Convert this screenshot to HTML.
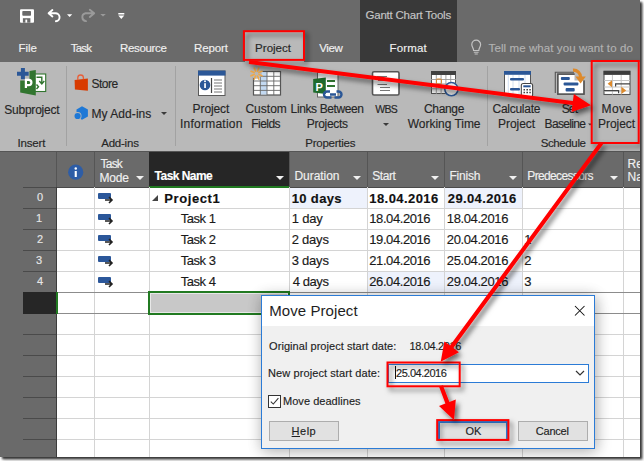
<!DOCTYPE html><html><head><meta charset="utf-8"><style>
*{box-sizing:border-box;}
html,body{margin:0;padding:0;background:#fff;width:644px;height:461px;overflow:hidden;}
body{font-family:"Liberation Sans",sans-serif;}
#page{position:absolute;left:0;top:0;width:640px;height:457px;overflow:hidden;background:#6a6a6a;box-shadow:2px 2px 2px rgba(0,0,0,.7), 3px 3px 3px rgba(0,0,0,.3);}
.a{position:absolute;}
.t{position:absolute;white-space:nowrap;line-height:1;-webkit-text-stroke:0.15px currentColor;}
.tab{position:absolute;top:42px;font-size:12px;letter-spacing:-0.45px;color:#f0f0f0;white-space:nowrap;line-height:1;}
.lbl{position:absolute;font-size:12px;letter-spacing:-0.35px;color:#262626;white-space:nowrap;line-height:15px;text-align:center;}
.grp{position:absolute;top:137.5px;font-size:11.5px;letter-spacing:-0.35px;color:#262626;white-space:nowrap;line-height:1;}
.sep{position:absolute;top:66px;width:1px;height:80px;background:#a2a2a2;}
.hd{position:absolute;font-size:12px;color:#f0f0f0;white-space:nowrap;line-height:1;}
.c{position:absolute;font-size:13px;letter-spacing:-0.35px;color:#1a1a1a;white-space:nowrap;line-height:1;}
.b{font-weight:bold;font-size:13.5px;letter-spacing:0;}
.tri{position:absolute;width:0;height:0;border-left:4px solid transparent;border-right:4px solid transparent;border-top:4px solid #f0f0f0;}
</style></head><body><div id="page">
<div class="a" style="left:0;top:0;width:640px;height:62px;background:#6a6a6a;"></div>
<div class="a" style="left:360px;top:0;width:97px;height:62px;background:#393939;"></div>
<div class="t" style="left:365.50px;top:10.10px;font-size:11.5px;color:#c6c6c6;letter-spacing:-0.225px;">Gantt Chart Tools</div>
<div class="t" style="left:18.40px;top:42.60px;font-size:11.5px;color:#f0f0f0;letter-spacing:0.033px;">File</div>
<div class="t" style="left:70.80px;top:42.60px;font-size:11.5px;color:#f0f0f0;letter-spacing:-0.800px;">Task</div>
<div class="t" style="left:120.00px;top:42.60px;font-size:11.5px;color:#f0f0f0;letter-spacing:-0.343px;">Resource</div>
<div class="t" style="left:194.00px;top:42.60px;font-size:11.5px;color:#f0f0f0;letter-spacing:-0.120px;">Report</div>
<div class="t" style="left:319.20px;top:42.60px;font-size:11.5px;color:#f0f0f0;letter-spacing:-0.367px;">View</div>
<div class="t" style="left:389.60px;top:42.60px;font-size:11.5px;color:#f0f0f0;letter-spacing:0.140px;">Format</div>
<div class="a" style="left:245px;top:32px;width:59px;height:30px;background:#b9b9b9;"></div>
<div class="t" style="left:255.10px;top:42.60px;font-size:11.5px;color:#262626;letter-spacing:0.017px;">Project</div>
<div class="t" style="left:488.60px;top:42.60px;font-size:11.5px;color:#b2b2b2;letter-spacing:0.088px;">Tell me what you want to do</div>
<div class="a" style="left:0;top:62px;width:640px;height:89px;background:#b9b9b9;"></div>
<div class="sep" style="left:66px;"></div>
<div class="sep" style="left:175px;"></div>
<div class="sep" style="left:487px;"></div>
<div class="t" style="left:4.20px;top:103.60px;font-size:12px;color:#262626;letter-spacing:-0.211px;">Subproject</div>
<div class="t" style="left:91.40px;top:78.20px;font-size:12px;color:#262626;letter-spacing:-0.475px;">Store</div>
<div class="t" style="left:91.40px;top:107.50px;font-size:12px;color:#262626;letter-spacing:0.067px;">My Add-ins</div>
<div class="t" style="left:192.60px;top:103.30px;font-size:12px;color:#262626;letter-spacing:-0.100px;">Project</div>
<div class="t" style="left:179.90px;top:118.40px;font-size:12px;color:#262626;letter-spacing:0.250px;">Information</div>
<div class="t" style="left:245.40px;top:103.30px;font-size:12px;color:#262626;letter-spacing:0.020px;">Custom</div>
<div class="t" style="left:251.30px;top:118.40px;font-size:12px;color:#262626;letter-spacing:-0.540px;">Fields</div>
<div class="t" style="left:290.60px;top:103.30px;font-size:12px;color:#262626;letter-spacing:-0.383px;">Links Between</div>
<div class="t" style="left:306.80px;top:118.40px;font-size:12px;color:#262626;letter-spacing:-0.314px;">Projects</div>
<div class="t" style="left:375.20px;top:104.30px;font-size:10.5px;color:#262626;letter-spacing:-0.700px;">WBS</div>
<div class="t" style="left:424.00px;top:103.30px;font-size:12px;color:#262626;letter-spacing:-0.340px;">Change</div>
<div class="t" style="left:407.80px;top:118.40px;font-size:12px;color:#262626;letter-spacing:-0.036px;">Working Time</div>
<div class="t" style="left:492.50px;top:103.30px;font-size:12px;color:#262626;letter-spacing:-0.263px;">Calculate</div>
<div class="t" style="left:498.00px;top:118.40px;font-size:12px;color:#262626;letter-spacing:-0.033px;">Project</div>
<div class="t" style="left:561.70px;top:103.30px;font-size:12px;color:#262626;letter-spacing:-0.850px;">Set</div>
<div class="t" style="left:544.60px;top:118.40px;font-size:12px;color:#262626;letter-spacing:-0.657px;">Baseline</div>
<div class="t" style="left:601.60px;top:103.30px;font-size:12px;color:#262626;letter-spacing:0.367px;">Move</div>
<div class="t" style="left:598.00px;top:118.40px;font-size:12px;color:#262626;letter-spacing:-0.033px;">Project</div>
<div class="t" style="left:17.60px;top:137.60px;font-size:11.5px;color:#262626;letter-spacing:-0.200px;">Insert</div>
<div class="t" style="left:101.20px;top:137.60px;font-size:11.5px;color:#262626;letter-spacing:-0.217px;">Add-ins</div>
<div class="t" style="left:305.30px;top:137.60px;font-size:11.5px;color:#262626;letter-spacing:-0.256px;">Properties</div>
<div class="t" style="left:540.70px;top:137.60px;font-size:11.5px;color:#262626;letter-spacing:-0.386px;">Schedule</div>
<svg class="a" style="left:0;top:0;" width="640" height="160" viewBox="0 0 640 160"><rect x="20" y="9.3" width="14" height="13.4" rx="1" fill="#fff"/><rect x="22.3" y="11" width="8.7" height="4.8" rx="0.8" fill="#6a6a6a"/><rect x="22.9" y="18.2" width="7.5" height="4.5" fill="#6a6a6a"/><rect x="25.4" y="19.6" width="1.8" height="3" fill="#fff"/><path d="M52.4 10L48.6 13.2L52.4 16.4M48.8 13.2H55.2A4 4 0 0 1 55.9 21.2" stroke="#fff" stroke-width="1.9" fill="none" stroke-linecap="round" stroke-linejoin="round"/><path d="M67 14.2H72.2L69.6 17Z" fill="#fff"/><path d="M89.8 9.8L94.2 13.2L89.8 16.9M94 13.2H85.5A4 4 0 0 0 86 21.1" stroke="#9a9a9a" stroke-width="1.9" fill="none" stroke-linecap="round" stroke-linejoin="round"/><path d="M100.3 14H105.8L103 16.6Z" fill="#9a9a9a"/><rect x="118.3" y="13" width="6" height="1.5" fill="#fff"/><path d="M118.3 15.6H124.3L121.3 19Z" fill="#fff"/><path d="M473.6 50.5C473.6 48 471.8 47 471.8 44.6A4.4 4.4 0 0 1 480.6 44.6C480.6 47 478.8 48 478.8 50.5Z" stroke="#c4c4c4" stroke-width="1.2" fill="none"/><path d="M473.8 52.3H478.6M474.6 54H477.8" stroke="#c4c4c4" stroke-width="1.1"/><path d="M20.2 80.4H29.5V71L35.8 69.9V95.6L20.2 92.5Z" fill="#31752f"/><rect x="35.2" y="74" width="10.5" height="17.5" fill="#fff" stroke="#31752f" stroke-width="1.1"/><path d="M36.5 77.3H41.8V83M39.3 81L41.8 84L44.3 81M36.5 84.5L38.5 86.8L36.5 89" stroke="#31752f" stroke-width="1.4" fill="none"/><path d="M25.9 88V79.9H28.8A2.6 2.6 0 0 1 28.8 85.1H25.9" stroke="#fff" stroke-width="2.2" fill="none"/><path d="M17 73.7H28.7M22.9 67.9V79.3" stroke="#2b5797" stroke-width="4"/><path d="M74.6 80.1L87.9 78.5V90.7L74.9 89.4Z" fill="#d83b01"/><path d="M77.8 80V77.8A2.8 2.8 0 0 1 83.4 77.8V79.2" stroke="#e8603a" stroke-width="1.3" fill="none"/><path d="M82 106.2L87.9 109.5V116.5L82 119.8L76.5 116.5V109.5Z" fill="#1e78d6"/><circle cx="77.6" cy="116" r="3.9" fill="#b9b9b9"/><circle cx="77.6" cy="116" r="3.1" fill="#1e78d6"/><path d="M161 112H167L164 115Z" fill="#3a3a3a"/><rect x="198.5" y="71" width="26.5" height="24.5" fill="#fff" stroke="#5a5a5a" stroke-width="1"/><rect x="198" y="70.6" width="27.5" height="5" fill="#2b5797"/><circle cx="205" cy="85" r="5.3" fill="#2b5797"/><rect x="204.2" y="83.2" width="1.7" height="4.8" fill="#fff"/><circle cx="205" cy="81.3" r="1" fill="#fff"/><path d="M211.5 78V93" stroke="#444" stroke-width="1.2"/><path d="M214 80H222M214 83H222M214 86H222M214 89H222M214 92H222" stroke="#777" stroke-width="1"/><rect x="253.5" y="71.5" width="27" height="23.5" fill="#fff" stroke="#555" stroke-width="1.2"/><rect x="260.3" y="72" width="6.7" height="22.5" fill="#c3d9f1"/><path d="M260.3 72V95M267 72V95M273.8 72V95M254 76.3H280M254 81H280M254 85.7H280M254 90.4H280" stroke="#666" stroke-width="0.9"/><circle cx="256.5" cy="73.6" r="5.2" fill="#b9b9b9"/><path d="M258.90 74.59L261.95 75.86M257.49 76.00L258.76 79.05M255.51 76.00L254.24 79.05M254.10 74.59L251.05 75.86M254.10 72.61L251.05 71.34M255.51 71.20L254.24 68.15M257.49 71.20L258.76 68.15M258.90 72.61L261.95 71.34" stroke="#f0a848" stroke-width="1.6" stroke-linecap="round"/><rect x="317.5" y="72.5" width="20.5" height="24.5" fill="#fff" stroke="#666" stroke-width="1"/><path d="M327 81H335M327 86H335" stroke="#31752f" stroke-width="1.8"/><path d="M313.2 79L325.8 77.5V94L313.2 92.5Z" fill="#1f6b2c"/><text x="315.5" y="90.5" font-family="Liberation Sans" font-weight="bold" font-size="11" fill="#fff">P</text><path d="M330 91.5H327A3 3 0 0 0 327 97.5H331.5M336.5 91.5H338.5A3 3 0 0 1 338.5 97.5H334.5M330 94.5H336" stroke="#2b5797" stroke-width="2.4" fill="none"/><rect x="372.5" y="71.7" width="26.5" height="23.3" rx="1.5" fill="#fff" stroke="#555" stroke-width="1.6"/><path d="M377 76.5H387M378 80.5H388M377.5 84.5H387M380 87.5H390M380 90.5H390" stroke="#666" stroke-width="0.9"/><path d="M383 123H389L386 126Z" fill="#3a3a3a"/><rect x="431.5" y="71.5" width="24" height="22" fill="#fff" stroke="#555" stroke-width="1"/><rect x="431" y="71" width="25" height="4" fill="#404040"/><path d="M436.3 75V94M441.1 75V94M445.9 75V94M450.7 75V94M431 79.5H456M431 84H456M431 88.8H456" stroke="#999" stroke-width="0.9"/><rect x="436.5" y="79" width="5" height="4.8" rx="1" fill="none" stroke="#dd8a2c" stroke-width="1"/><circle cx="451.4" cy="89.2" r="6.6" fill="#eee" stroke="#2b5797" stroke-width="1.5"/><rect x="504.5" y="71.5" width="26" height="24" fill="#fff" stroke="#555" stroke-width="1"/><rect x="504" y="71" width="27" height="3.8" fill="#2b5797"/><path d="M508.3 75V96M513 75V96M519 75V96M525 75V96" stroke="#c6d8ee" stroke-width="0.8"/><rect x="510" y="78" width="14" height="2.4" rx="1" fill="#2b5797"/><rect x="510" y="88" width="10" height="2.4" rx="1" fill="#2b5797"/><rect x="521.3" y="83.5" width="11.3" height="13.5" rx="2" fill="#fff" stroke="#444" stroke-width="1.1"/><rect x="523.3" y="85.3" width="7.3" height="2" fill="#2b5797"/><path d="M523.5 89.7H525M526.4 89.7H528M529.3 89.7H530.8M523.5 92.5H525M526.4 92.5H528M529.3 92.5H530.8" stroke="#444" stroke-width="1.4"/><path d="M555.3 92.9V72.3H574" stroke="#555" stroke-width="1.1" fill="none"/><rect x="557.8" y="74.2" width="26.2" height="20" fill="#fff" stroke="#555" stroke-width="1.3"/><path d="M574.5 73V80.5H585V73Z" fill="#b9b9b9"/><path d="M574.5 74.2H557.8V94.2H584V80.5" stroke="#555" stroke-width="1.3" fill="none"/><rect x="560.9" y="77" width="8.9" height="3" rx="1" fill="#2b5797"/><rect x="563.6" y="82.4" width="14.8" height="3.2" rx="1" fill="#2b5797"/><rect x="565.6" y="88" width="9.1" height="3.4" rx="1" fill="#2b5797"/><path d="M573 70.2A7 7 0 0 1 580.6 77.5" stroke="#dd8a2c" stroke-width="3.2" fill="none"/><path d="M575.4 76.5H585.8L580.6 83.6Z" fill="#dd8a2c"/><path d="M588 123.5H592L590 125.5Z" fill="#3a3a3a"/><rect x="604" y="71.3" width="26" height="23.2" fill="#fff" stroke="#555" stroke-width="1.1"/><rect x="603.6" y="70.9" width="26.7" height="4" fill="#3c3c3c"/><path d="M612.4 75V94.5M621.2 75V94.5M604 80.5H630M604 87H630M604 91H630" stroke="#c4c4c4" stroke-width="1"/><path d="M615.6 86.5V83.8H630M604 90.6H618.6V93.2" stroke="#444" stroke-width="1.2" fill="none"/><path d="M612 80.3V87.2L607.6 83.7Z" fill="#dd8a2c"/><path d="M621.4 86.8V94L626.2 90.4Z" fill="#dd8a2c"/></svg>
<div class="a" style="left:57px;top:187px;width:583px;height:270px;background:#fff;"></div>
<div class="a" style="left:0;top:151px;width:640px;height:36px;background:#6a6a6a;"></div>
<div class="a" style="left:149px;top:151px;width:140px;height:36px;background:#262626;"></div>
<div class="a" style="left:149px;top:186px;width:140px;height:2px;background:#217a21;"></div>
<div class="a" style="left:23px;top:187px;width:126px;height:1px;background:#4a4a4a;"></div>
<div class="a" style="left:289px;top:187px;width:351px;height:1px;background:#4a4a4a;"></div>
<div class="a" style="left:56px;top:151px;width:1px;height:36px;background:#555;"></div>
<div class="a" style="left:94px;top:151px;width:1px;height:36px;background:#555;"></div>
<div class="a" style="left:289px;top:151px;width:1px;height:36px;background:#555;"></div>
<div class="a" style="left:367px;top:151px;width:1px;height:36px;background:#555;"></div>
<div class="a" style="left:444px;top:151px;width:1px;height:36px;background:#555;"></div>
<div class="a" style="left:522px;top:151px;width:1px;height:36px;background:#555;"></div>
<div class="a" style="left:623px;top:151px;width:1px;height:36px;background:#555;"></div>
<div class="a" style="left:23px;top:208px;width:34px;height:1px;background:#4a4a4a;"></div>
<div class="a" style="left:23px;top:229px;width:34px;height:1px;background:#4a4a4a;"></div>
<div class="a" style="left:23px;top:250px;width:34px;height:1px;background:#4a4a4a;"></div>
<div class="a" style="left:23px;top:271px;width:34px;height:1px;background:#4a4a4a;"></div>
<div class="a" style="left:23px;top:292px;width:34px;height:1px;background:#4a4a4a;"></div>
<div class="a" style="left:23px;top:313px;width:34px;height:1px;background:#4a4a4a;"></div>
<div class="a" style="left:23px;top:334px;width:34px;height:1px;background:#4a4a4a;"></div>
<div class="a" style="left:23px;top:355px;width:34px;height:1px;background:#4a4a4a;"></div>
<div class="a" style="left:23px;top:376px;width:34px;height:1px;background:#4a4a4a;"></div>
<div class="a" style="left:23px;top:397px;width:34px;height:1px;background:#4a4a4a;"></div>
<div class="a" style="left:23px;top:418px;width:34px;height:1px;background:#4a4a4a;"></div>
<div class="a" style="left:23px;top:439px;width:34px;height:1px;background:#4a4a4a;"></div>
<div class="a" style="left:290px;top:188px;width:77px;height:20px;background:#eef2fc;"></div>
<div class="a" style="left:445px;top:188px;width:77px;height:20px;background:#eef2fc;"></div>
<div class="a" style="left:368px;top:272px;width:76px;height:20px;background:#eef2fc;"></div>
<div class="a" style="left:445px;top:272px;width:77px;height:20px;background:#eef2fc;"></div>
<div class="a" style="left:57px;top:208px;width:583px;height:1px;background:#d4d4d4;"></div>
<div class="a" style="left:57px;top:229px;width:583px;height:1px;background:#d4d4d4;"></div>
<div class="a" style="left:57px;top:250px;width:583px;height:1px;background:#d4d4d4;"></div>
<div class="a" style="left:57px;top:271px;width:583px;height:1px;background:#d4d4d4;"></div>
<div class="a" style="left:57px;top:292px;width:583px;height:1px;background:#d4d4d4;"></div>
<div class="a" style="left:57px;top:313px;width:583px;height:1px;background:#d4d4d4;"></div>
<div class="a" style="left:57px;top:334px;width:583px;height:1px;background:#d4d4d4;"></div>
<div class="a" style="left:57px;top:355px;width:583px;height:1px;background:#d4d4d4;"></div>
<div class="a" style="left:57px;top:376px;width:583px;height:1px;background:#d4d4d4;"></div>
<div class="a" style="left:57px;top:397px;width:583px;height:1px;background:#d4d4d4;"></div>
<div class="a" style="left:57px;top:418px;width:583px;height:1px;background:#d4d4d4;"></div>
<div class="a" style="left:57px;top:439px;width:583px;height:1px;background:#d4d4d4;"></div>
<div class="a" style="left:94px;top:187px;width:1px;height:270px;background:#d4d4d4;"></div>
<div class="a" style="left:149px;top:187px;width:1px;height:270px;background:#d4d4d4;"></div>
<div class="a" style="left:289px;top:187px;width:1px;height:270px;background:#d4d4d4;"></div>
<div class="a" style="left:367px;top:187px;width:1px;height:270px;background:#d4d4d4;"></div>
<div class="a" style="left:444px;top:187px;width:1px;height:270px;background:#d4d4d4;"></div>
<div class="a" style="left:522px;top:187px;width:1px;height:270px;background:#d4d4d4;"></div>
<div class="a" style="left:623px;top:187px;width:1px;height:270px;background:#d4d4d4;"></div>
<div class="a" style="left:56px;top:187px;width:1px;height:270px;background:#3c3c3c;"></div>
<div class="a" style="left:23px;top:292px;width:34px;height:22px;background:#262626;"></div>
<div class="a" style="left:57px;top:292px;width:583px;height:1px;background:#8c8c8c;"></div>
<div class="a" style="left:57px;top:313px;width:583px;height:1px;background:#8c8c8c;"></div>
<div class="a" style="left:56px;top:292px;width:2px;height:22px;background:#217a21;"></div>
<div class="a" style="left:148px;top:291px;width:142px;height:24px;border:2px solid #217a21;background:#c8c8c8;box-shadow:inset 0 0 0 1px #e8e8e8;"></div>
<div class="a" style="left:0;top:151px;width:640px;height:1px;background:#555;"></div>
<svg class="a" style="left:68px;top:164px;" width="16" height="16"><circle cx="7.7" cy="8.2" r="7.6" fill="#2e5da6"/><rect x="6.7" y="7" width="2.1" height="6" fill="#fff"/><circle cx="7.75" cy="4.6" r="1.25" fill="#fff"/></svg>
<div class="t" style="left:100.50px;top:157.80px;font-size:12px;color:#f0f0f0;letter-spacing:-0.767px;">Task</div>
<div class="t" style="left:99.50px;top:171.70px;font-size:12px;color:#f0f0f0;letter-spacing:-0.167px;">Mode</div>
<div class="tri" style="left:136px;top:176px;"></div>
<div class="t" style="left:154.60px;top:169.60px;font-size:12px;color:#ffffff;font-weight:700;letter-spacing:-0.537px;">Task Name</div>
<div class="tri" style="left:276px;top:176px;"></div>
<div class="t" style="left:294.40px;top:170.00px;font-size:12px;color:#f0f0f0;letter-spacing:-0.029px;">Duration</div>
<div class="tri" style="left:353px;top:176px;"></div>
<div class="t" style="left:372.20px;top:170.00px;font-size:12px;color:#f0f0f0;letter-spacing:-0.400px;">Start</div>
<div class="tri" style="left:431px;top:176px;"></div>
<div class="t" style="left:449.50px;top:170.00px;font-size:12px;color:#f0f0f0;letter-spacing:-0.240px;">Finish</div>
<div class="tri" style="left:509px;top:176px;"></div>
<div class="t" style="left:527.30px;top:170.00px;font-size:12px;color:#f0f0f0;letter-spacing:-0.645px;">Predecessors</div>
<div class="tri" style="left:610px;top:176px;"></div>
<div class="t" style="left:627.60px;top:157.80px;font-size:12px;color:#f0f0f0;">Re</div>
<div class="t" style="left:627.60px;top:171.30px;font-size:12px;color:#f0f0f0;">Na</div>
<div class="t" style="left:37.10px;top:191.60px;font-size:11px;color:#e6e6e6;">0</div>
<div class="t" style="left:36.10px;top:212.60px;font-size:11px;color:#e6e6e6;">1</div>
<div class="t" style="left:37.10px;top:233.60px;font-size:11px;color:#e6e6e6;">2</div>
<div class="t" style="left:36.10px;top:254.60px;font-size:11px;color:#e6e6e6;">3</div>
<div class="t" style="left:37.10px;top:275.60px;font-size:11px;color:#e6e6e6;">4</div>
<div class="a" style="left:98px;top:193px;width:13px;height:6px;background:#2b579a;border-radius:1px;"></div>
<svg class="a" style="left:104px;top:196px;" width="10" height="8" viewBox="0 0 10 8"><path d="M1 4H8M5 1L8 4L5 7" stroke="#222" stroke-width="1.6" fill="none"/></svg>
<div class="a" style="left:98px;top:214px;width:13px;height:6px;background:#2b579a;border-radius:1px;"></div>
<svg class="a" style="left:104px;top:217px;" width="10" height="8" viewBox="0 0 10 8"><path d="M1 4H8M5 1L8 4L5 7" stroke="#222" stroke-width="1.6" fill="none"/></svg>
<div class="a" style="left:98px;top:235px;width:13px;height:6px;background:#2b579a;border-radius:1px;"></div>
<svg class="a" style="left:104px;top:238px;" width="10" height="8" viewBox="0 0 10 8"><path d="M1 4H8M5 1L8 4L5 7" stroke="#222" stroke-width="1.6" fill="none"/></svg>
<div class="a" style="left:98px;top:256px;width:13px;height:6px;background:#2b579a;border-radius:1px;"></div>
<svg class="a" style="left:104px;top:259px;" width="10" height="8" viewBox="0 0 10 8"><path d="M1 4H8M5 1L8 4L5 7" stroke="#222" stroke-width="1.6" fill="none"/></svg>
<div class="a" style="left:98px;top:277px;width:13px;height:6px;background:#2b579a;border-radius:1px;"></div>
<svg class="a" style="left:104px;top:280px;" width="10" height="8" viewBox="0 0 10 8"><path d="M1 4H8M5 1L8 4L5 7" stroke="#222" stroke-width="1.6" fill="none"/></svg>
<div class="t" style="left:164.30px;top:192.40px;font-size:13px;color:#111;font-weight:700;letter-spacing:0.586px;">Project1</div>
<div class="t" style="left:291.70px;top:192.40px;font-size:13px;color:#111;font-weight:700;letter-spacing:0.367px;">10 days</div>
<div class="t" style="left:369.30px;top:192.40px;font-size:13px;color:#111;font-weight:700;letter-spacing:0.433px;">18.04.2016</div>
<div class="t" style="left:447.80px;top:192.40px;font-size:13px;color:#111;font-weight:700;letter-spacing:0.367px;">29.04.2016</div>
<div class="t" style="left:180.80px;top:212.40px;font-size:13px;color:#1a1a1a;letter-spacing:-0.480px;">Task 1</div>
<div class="t" style="left:291.70px;top:212.40px;font-size:13px;color:#1a1a1a;letter-spacing:-0.200px;">1 day</div>
<div class="t" style="left:369.30px;top:212.40px;font-size:13px;color:#1a1a1a;letter-spacing:-0.422px;">18.04.2016</div>
<div class="t" style="left:446.80px;top:212.40px;font-size:13px;color:#1a1a1a;letter-spacing:-0.389px;">18.04.2016</div>
<div class="t" style="left:180.80px;top:233.40px;font-size:13px;color:#1a1a1a;letter-spacing:-0.480px;">Task 2</div>
<div class="t" style="left:291.70px;top:233.40px;font-size:13px;color:#1a1a1a;letter-spacing:-0.220px;">2 days</div>
<div class="t" style="left:369.30px;top:233.40px;font-size:13px;color:#1a1a1a;letter-spacing:-0.422px;">19.04.2016</div>
<div class="t" style="left:446.80px;top:233.40px;font-size:13px;color:#1a1a1a;letter-spacing:-0.389px;">20.04.2016</div>
<div class="t" style="left:524.30px;top:233.40px;font-size:13px;color:#1a1a1a;">1</div>
<div class="t" style="left:180.80px;top:254.40px;font-size:13px;color:#1a1a1a;letter-spacing:-0.480px;">Task 3</div>
<div class="t" style="left:291.70px;top:254.40px;font-size:13px;color:#1a1a1a;letter-spacing:-0.220px;">3 days</div>
<div class="t" style="left:369.30px;top:254.40px;font-size:13px;color:#1a1a1a;letter-spacing:-0.422px;">21.04.2016</div>
<div class="t" style="left:446.80px;top:254.40px;font-size:13px;color:#1a1a1a;letter-spacing:-0.389px;">25.04.2016</div>
<div class="t" style="left:524.30px;top:254.40px;font-size:13px;color:#1a1a1a;">2</div>
<div class="t" style="left:180.80px;top:275.40px;font-size:13px;color:#1a1a1a;letter-spacing:-0.480px;">Task 4</div>
<div class="t" style="left:292.70px;top:275.40px;font-size:13px;color:#1a1a1a;letter-spacing:-0.420px;">4 days</div>
<div class="t" style="left:369.30px;top:275.40px;font-size:13px;color:#1a1a1a;letter-spacing:-0.422px;">26.04.2016</div>
<div class="t" style="left:446.80px;top:275.40px;font-size:13px;color:#1a1a1a;letter-spacing:-0.389px;">29.04.2016</div>
<div class="t" style="left:524.30px;top:275.40px;font-size:13px;color:#1a1a1a;">3</div>
<svg class="a" style="left:152px;top:194px;" width="8" height="8"><path d="M6 1V7H0Z" fill="#444"/></svg>
<div class="a" style="left:261px;top:295px;width:334px;height:154px;border:1px solid #2b7bd6;background:#f0f0f0;box-shadow:2px 3px 14px rgba(0,0,0,.22), 0 0 14px rgba(0,0,0,.14);"></div>
<div class="a" style="left:262px;top:296px;width:332px;height:30px;background:#fff;"></div>
<div class="t" style="left:269.20px;top:303.00px;font-size:15px;color:#1e1e1e;letter-spacing:0.082px;-webkit-text-stroke:0;">Move Project</div>
<svg class="a" style="left:574px;top:305px;" width="12" height="12"><path d="M1 1L10.5 10.5M10.5 1L1 10.5" stroke="#111" stroke-width="1.05"/></svg>
<div class="t" style="left:269.10px;top:341.30px;font-size:11px;color:#1e1e1e;letter-spacing:0.048px;">Original project start date:</div>
<div class="t" style="left:409.60px;top:341.30px;font-size:11px;color:#1e1e1e;letter-spacing:-0.367px;">18.04.2016</div>
<div class="t" style="left:268.10px;top:367.80px;font-size:11px;color:#1e1e1e;letter-spacing:0.086px;">New project start date:</div>
<div class="a" style="left:388px;top:364px;width:201px;height:19px;border:1px solid #2b7bd6;background:#fff;"></div>
<div class="t" style="left:396.00px;top:367.80px;font-size:11px;color:#1e1e1e;letter-spacing:-0.467px;">25.04.2016</div>
<div class="a" style="left:395px;top:366px;width:1px;height:13px;background:#111;"></div>
<svg class="a" style="left:575px;top:370px;" width="10" height="6"><path d="M1 1L5 5L9 1" stroke="#333" stroke-width="1.2" fill="none"/></svg>
<div class="a" style="left:268px;top:395px;width:13px;height:13px;border:1px solid #333;background:#fff;"></div>
<svg class="a" style="left:269px;top:396px;" width="11" height="11"><path d="M1.8 5.6L4.3 8.1L9.4 2.2" stroke="#333" stroke-width="1.05" fill="none"/></svg>
<div class="t" style="left:283.00px;top:396.00px;font-size:11px;color:#1e1e1e;letter-spacing:0.038px;">Move deadlines</div>
<div class="a" style="left:269px;top:421px;width:70px;height:20px;border:1px solid #adadad;background:#e1e1e1;"></div>
<div class="t" style="left:291.60px;top:425.80px;font-size:11px;color:#1e1e1e;letter-spacing:0.500px;"><u>H</u>elp</div>
<div class="a" style="left:438px;top:421px;width:70px;height:20px;border:2px solid #2b7bd6;background:#e1e1e1;"></div>
<div class="t" style="left:465.50px;top:425.80px;font-size:11px;color:#1e1e1e;">OK</div>
<div class="a" style="left:518px;top:421px;width:70px;height:20px;border:1px solid #adadad;background:#e1e1e1;"></div>
<div class="t" style="left:535.80px;top:425.80px;font-size:11px;color:#1e1e1e;letter-spacing:-0.220px;">Cancel</div>
<svg class="a" style="left:0;top:0;" width="640" height="456" viewBox="0 0 640 456"><defs><filter id="sh" x="-20%" y="-20%" width="140%" height="140%"><feDropShadow dx="3" dy="3.5" stdDeviation="2.6" flood-color="#000" flood-opacity="0.55"/></filter></defs><g filter="url(#sh)" fill="none" stroke="#ff0000" stroke-width="2"><rect x="243.9" y="31.2" width="60.1" height="28.7"/><rect x="591.7" y="61" width="47" height="82"/><rect x="387.5" y="362.5" width="72.2" height="23.8"/><rect x="437.2" y="420.1" width="71.2" height="19.8"/></g><g filter="url(#sh)" fill="#ff0000"><path d="M248.8 63.9 L572.4 105.0 L571.5 111.9 L591.0 105.3 L573.8 94.0 L572.9 101.0 L249.2 60.1Z"/><path d="M599.9 141.8 L450.0 345.6 L444.4 341.6 L440.7 361.8 L458.9 352.2 L453.3 348.1 L603.1 144.2Z"/><path d="M439.1 386.7 L445.4 403.5 L439.0 405.9 L454.0 420.0 L455.8 399.5 L449.4 402.0 L442.9 385.3Z"/></g></svg>
</div></body></html>
